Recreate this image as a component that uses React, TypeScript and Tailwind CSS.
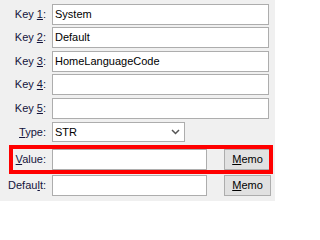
import React from "react";

const font = { fontFamily: '"Liberation Sans", Arial, sans-serif' };

function Label({ children }: { children: React.ReactNode }) {
  return (
    <div className="w-[47px] shrink-0 text-right pr-[1px] text-[11px] text-[#14143c] leading-none">
      {children}
    </div>
  );
}

function TextInput({ value, w }: { value?: string; w?: string }) {
  return (
    <div
      className={`${w ?? "w-[217px]"} h-[21px] border border-[#adadad] bg-white flex items-center pl-[2px] text-[11px] text-black leading-none`}
    >
      {value}
    </div>
  );
}

function MemoButton() {
  return (
    <div className="ml-[12px] w-[47px] h-[21px] border border-[#adadad] bg-[#e1e1e1] flex items-center justify-center text-[11px] text-black leading-none">
      <span>
        <u>M</u>emo
      </span>
    </div>
  );
}

export default function App() {
  return (
    <div className="w-[275px] h-[201px] bg-[#f0f0f0] overflow-hidden relative" style={font}>
      <div className="flex flex-col pt-[4px]">
        <div className="flex items-center gap-[5px]">
          <Label>
            Key <u>1</u>:
          </Label>
          <TextInput value="System" />
        </div>
        <div className="flex items-center gap-[5px] mt-[2px]">
          <Label>
            Key <u>2</u>:
          </Label>
          <TextInput value="Default" />
        </div>
        <div className="flex items-center gap-[5px] mt-[3px]">
          <Label>
            Key <u>3</u>:
          </Label>
          <TextInput value="HomeLanguageCode" />
        </div>
        <div className="flex items-center gap-[5px] mt-[2px]">
          <Label>
            Key <u>4</u>:
          </Label>
          <TextInput />
        </div>
        <div className="flex items-center gap-[5px] mt-[3px]">
          <Label>
            Key <u>5</u>:
          </Label>
          <TextInput />
        </div>
        <div className="flex items-center gap-[5px] mt-[3px]">
          <Label>
            <u>T</u>ype:
          </Label>
          <div className="w-[133px] h-[20px] border border-[#adadad] bg-white flex items-center justify-between pl-[2px] pr-[4px] text-[11px] text-black leading-none">
            <span>STR</span>
            <svg width="9" height="6" viewBox="0 0 9 6">
              <path d="M1 1 L4.5 4.5 L8 1" fill="none" stroke="#555" strokeWidth="1.5" />
            </svg>
          </div>
        </div>
        <div className="flex items-center gap-[5px] mt-[7px]">
          <Label>
            <u>V</u>alue:
          </Label>
          <TextInput w="w-[155px]" />
          <MemoButton />
        </div>
        <div className="flex items-center gap-[5px] mt-[5px]">
          <Label>
            Defau<u>l</u>t:
          </Label>
          <TextInput w="w-[155px]" />
          <MemoButton />
        </div>
      </div>
      <div className="absolute left-[9px] top-[145px] w-[264px] h-[29px] border-[4px] border-[#ff0000] pointer-events-none" />
    </div>
  );
}
